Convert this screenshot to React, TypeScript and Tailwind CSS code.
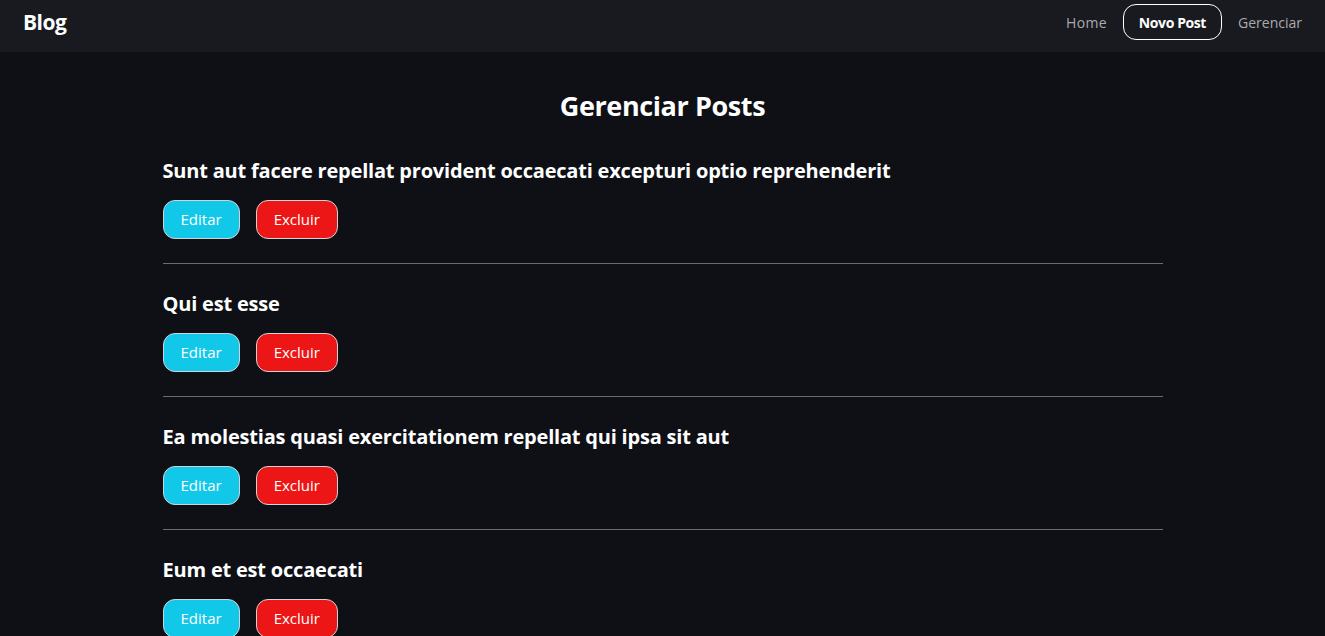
import React from "react";

const posts = [
  "Sunt aut facere repellat provident occaecati excepturi optio reprehenderit",
  "Qui est esse",
  "Ea molestias quasi exercitationem repellat qui ipsa sit aut",
  "Eum et est occaecati",
  "Nesciunt quas odio",
];

export default function App() {
  return (
    <div className="min-h-screen bg-[#0e1015] text-white" style={{ fontFamily: '"Open Sans", "Noto Sans", sans-serif' }}>
      <header className="h-[52px] bg-[#191a1f] flex items-start justify-between pl-[23px] pr-[23px] pt-[4px]">
        <span className="text-[21px] font-bold tracking-[-0.5px] leading-[36px]">Blog</span>
        <nav className="flex items-center gap-4 text-[14px] h-[36px]">
          <a className="text-[#a9aab0] tracking-[0.3px]">Home</a>
          <a className="h-[36px] px-[15px] flex items-center border border-white rounded-[13px] font-bold text-white tracking-[-0.4px]">Novo Post</a>
          <a className="text-[#a9aab0]">Gerenciar</a>
        </nav>
      </header>
      <main className="w-[1000px] mx-auto pt-[36px]">
        <h1 className="text-center text-[27px] font-bold tracking-[-0.4px] leading-[36px] mb-[7px]">Gerenciar Posts</h1>
        {posts.map((p, i) => (
          <div key={i}>
            <div className="pt-[26px]">
              <h2 className="text-[20px] font-bold leading-[28px] tracking-[-0.2px]">{p}</h2>
              <div className="flex gap-4 mt-[15px]">
                <button className="h-[39px] px-[17px] rounded-[12px] bg-[#12c8e8] border border-[#cfd4da] text-[15px]">Editar</button>
                <button className="h-[39px] px-[17px] rounded-[12px] bg-[#ec1616] border border-[#cfd4da] text-[15px]">Excluir</button>
              </div>
            </div>
            <hr className="mt-[24px] border-0 border-t border-[#6b6c70]" />
          </div>
        ))}
      </main>
    </div>
  );
}
